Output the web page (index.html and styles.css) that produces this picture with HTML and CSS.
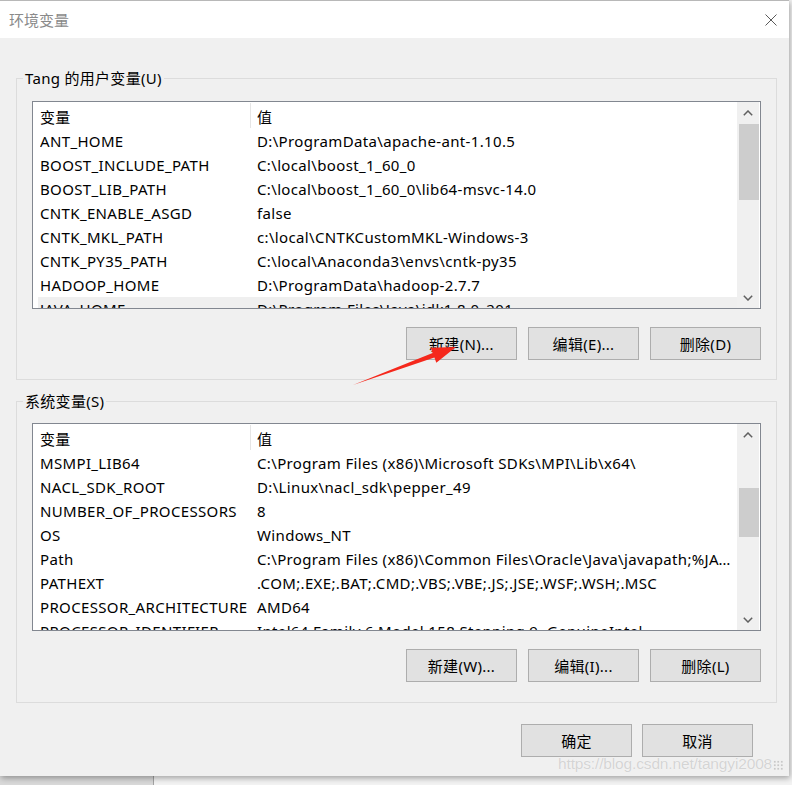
FILE: index.html
```html
<!DOCTYPE html>
<html lang="zh-CN">
<head>
    <meta charset="UTF-8">
    <title>环境变量</title>
    <link rel="stylesheet" href="styles.css">
</head>
<body>
    <div class="dialog">
        <div class="titlebar">
            <span class="title">环境变量</span>
            <svg class="close" width="12" height="12" viewBox="0 0 12 12">
                <path d="M0.5 0.5 L11.5 11.5 M11.5 0.5 L0.5 11.5" stroke="#5a5a5a" stroke-width="1" fill="none"/>
            </svg>
        </div>
        <div class="content">
            <fieldset class="group group-user">
                <legend>Tang 的用户变量(U)</legend>
                <div class="listview">
                    <div class="list-main">
                        <div class="list-head">
                            <div class="head-name">变量</div>
                            <div class="col-sep"></div>
                            <div class="head-value">值</div>
                        </div>
                        <div class="row"><div class="cell-name">ANT_HOME</div><div class="cell-value">D:\ProgramData\apache-ant-1.10.5</div></div>
                        <div class="row"><div class="cell-name">BOOST_INCLUDE_PATH</div><div class="cell-value">C:\local\boost_1_60_0</div></div>
                        <div class="row"><div class="cell-name">BOOST_LIB_PATH</div><div class="cell-value">C:\local\boost_1_60_0\lib64-msvc-14.0</div></div>
                        <div class="row"><div class="cell-name">CNTK_ENABLE_ASGD</div><div class="cell-value">false</div></div>
                        <div class="row"><div class="cell-name">CNTK_MKL_PATH</div><div class="cell-value">c:\local\CNTKCustomMKL-Windows-3</div></div>
                        <div class="row"><div class="cell-name">CNTK_PY35_PATH</div><div class="cell-value">C:\local\Anaconda3\envs\cntk-py35</div></div>
                        <div class="row"><div class="cell-name">HADOOP_HOME</div><div class="cell-value">D:\ProgramData\hadoop-2.7.7</div></div>
                        <div class="row row-hover"><div class="cell-name">JAVA_HOME</div><div class="cell-value">D:\Program Files\Java\jdk1.8.0_201</div></div>
                    </div>
                    <div class="scrollbar">
                        <div class="sb-arrow">
                            <svg width="10" height="6" viewBox="0 0 10 6"><path d="M0.8 5.2 L5 1 L9.2 5.2" stroke="#606060" stroke-width="1.5" fill="none"/></svg>
                        </div>
                        <div class="sb-track"><div class="sb-thumb thumb-user"></div></div>
                        <div class="sb-arrow">
                            <svg width="10" height="6" viewBox="0 0 10 6"><path d="M0.8 0.8 L5 5 L9.2 0.8" stroke="#606060" stroke-width="1.5" fill="none"/></svg>
                        </div>
                    </div>
                </div>
                <div class="btn-row">
                    <button class="btn">新建(N)...</button>
                    <button class="btn">编辑(E)...</button>
                    <button class="btn">删除(D)</button>
                </div>
            </fieldset>

            <fieldset class="group group-sys">
                <legend>系统变量(S)</legend>
                <div class="listview">
                    <div class="list-main">
                        <div class="list-head">
                            <div class="head-name">变量</div>
                            <div class="col-sep"></div>
                            <div class="head-value">值</div>
                        </div>
                        <div class="row"><div class="cell-name">MSMPI_LIB64</div><div class="cell-value">C:\Program Files (x86)\Microsoft SDKs\MPI\Lib\x64\</div></div>
                        <div class="row"><div class="cell-name">NACL_SDK_ROOT</div><div class="cell-value">D:\Linux\nacl_sdk\pepper_49</div></div>
                        <div class="row"><div class="cell-name">NUMBER_OF_PROCESSORS</div><div class="cell-value">8</div></div>
                        <div class="row"><div class="cell-name">OS</div><div class="cell-value">Windows_NT</div></div>
                        <div class="row"><div class="cell-name">Path</div><div class="cell-value">C:\Program Files (x86)\Common Files\Oracle\Java\javapath;%JAVA_HOME%\bin;%JAVA_HOME%\jre\bin</div></div>
                        <div class="row"><div class="cell-name">PATHEXT</div><div class="cell-value">.COM;.EXE;.BAT;.CMD;.VBS;.VBE;.JS;.JSE;.WSF;.WSH;.MSC</div></div>
                        <div class="row"><div class="cell-name">PROCESSOR_ARCHITECTURE</div><div class="cell-value">AMD64</div></div>
                        <div class="row"><div class="cell-name">PROCESSOR_IDENTIFIER</div><div class="cell-value">Intel64 Family 6 Model 158 Stepping 9, GenuineIntel</div></div>
                    </div>
                    <div class="scrollbar">
                        <div class="sb-arrow">
                            <svg width="10" height="6" viewBox="0 0 10 6"><path d="M0.8 5.2 L5 1 L9.2 5.2" stroke="#606060" stroke-width="1.5" fill="none"/></svg>
                        </div>
                        <div class="sb-track"><div class="sb-thumb thumb-sys"></div></div>
                        <div class="sb-arrow">
                            <svg width="10" height="6" viewBox="0 0 10 6"><path d="M0.8 0.8 L5 5 L9.2 0.8" stroke="#606060" stroke-width="1.5" fill="none"/></svg>
                        </div>
                    </div>
                </div>
                <div class="btn-row">
                    <button class="btn">新建(W)...</button>
                    <button class="btn">编辑(I)...</button>
                    <button class="btn">删除(L)</button>
                </div>
            </fieldset>

            <div class="dialog-actions">
                <button class="btn">确定</button>
                <button class="btn">取消</button>
            </div>
        </div>
    </div>

    <!-- red marker arrow drawn over the screenshot -->
    <svg class="arrow" width="792" height="785" viewBox="0 0 792 785">
        <polygon points="353,385 432.6,353 430.7,347.8 456,347 436.3,362.8 434.4,357.6" fill="#f5281c"/>
    </svg>

    <div class="watermark">https://blog.csdn.net/tangyi2008<span class="wm-dots"></span></div>
</body>
</html>
```

FILE: styles.css
```css
* {
    box-sizing: border-box;
}
body {
    margin: 0;
    width: 792px;
    height: 785px;
    overflow: hidden;
    position: relative;
    font-family: "Noto Sans", "Noto Sans CJK SC", sans-serif;
    font-size: 15px;
    color: #000000;
    background: linear-gradient(to right, #d9d9d9 0, #d9d9d9 153px, #a3a3a3 153px, #a3a3a3 154px, #f3f3f3 154px);
}
.dialog {
    width: 789px;
    height: 776px;
    background-color: #f0f0f0;
    border-top: 1px solid #b8b8b8;
    box-shadow: 1px 2px 6px rgba(0, 0, 0, 0.35);
}
.titlebar {
    height: 37px;
    background-color: #ffffff;
    display: flex;
    align-items: center;
    justify-content: space-between;
    padding: 0 12px 0 9px;
}
.title {
    color: #8a8a8a;
    font-size: 15px;
}
.content {
    padding: 30px 12px 0 16px;
}
.group {
    margin: 0;
    padding: 13px 15px 19px;
    border: 1px solid #dcdcdc;
    min-width: 0;
}
.group legend {
    padding: 0 2px;
    margin-left: -9px;
    line-height: 20px;
    letter-spacing: 0.3px;
}
.group-sys {
    margin-top: 11px;
    padding-top: 12px;
    padding-bottom: 20px;
}
.listview {
    height: 208px;
    border: 1px solid #828790;
    background-color: #ffffff;
    display: flex;
}
.list-main {
    flex: 1;
    min-width: 0;
    overflow: hidden;
    letter-spacing: 0.35px;
}
.list-head {
    height: 27px;
    display: flex;
    align-items: center;
}
.head-name {
    width: 217px;
    height: 27px;
    padding: 3px 0 0 7px;
    line-height: 25px;
}
.col-sep {
    width: 1px;
    height: 25px;
    background-color: #e5e5e5;
}
.head-value {
    flex: 1;
    height: 27px;
    padding: 3px 0 0 6px;
    line-height: 25px;
}
.row {
    display: flex;
    height: 24px;
    line-height: 24px;
    margin-left: 5px;
    padding-left: 2px;
    white-space: nowrap;
}
.row-hover {
    background-color: #efefef;
}
.cell-name {
    width: 210px;
    flex-shrink: 0;
    overflow: hidden;
}
.cell-value {
    flex: 1;
    min-width: 0;
    padding-left: 7px;
    padding-right: 6px;
    overflow: hidden;
    text-overflow: ellipsis;
}
.scrollbar {
    width: 22px;
    margin-right: 1px;
    background-color: #f0f0f0;
    display: flex;
    flex-direction: column;
}
.sb-arrow {
    height: 21px;
    display: flex;
    align-items: center;
    justify-content: center;
}
.sb-track {
    flex: 1;
    padding-left: 2px;
}
.sb-thumb {
    background-color: #cdcdcd;
}
.thumb-user {
    margin-top: 1px;
    height: 76px;
}
.thumb-sys {
    margin-top: 43px;
    height: 49px;
}
.btn-row {
    display: flex;
    justify-content: flex-end;
    gap: 11px;
    margin-top: 18px;
}
.btn {
    width: 111px;
    height: 33px;
    padding: 0;
    background-color: #e1e1e1;
    border: 1px solid #adadad;
    font-family: inherit;
    font-size: 15px;
    letter-spacing: 0.3px;
    color: #000000;
}
.dialog-actions {
    display: flex;
    justify-content: flex-end;
    gap: 10px;
    margin-top: 21px;
    padding-right: 24px;
}
.arrow {
    position: absolute;
    left: 0;
    top: 0;
    pointer-events: none;
}
.watermark {
    position: absolute;
    left: 558px;
    top: 755px;
    white-space: nowrap;
    font-family: "Liberation Sans", Arial, sans-serif;
    font-size: 15.5px;
    letter-spacing: -0.15px;
    color: #d4d4d4;
    text-shadow: 0 0 1px #ffffff;
    display: flex;
    align-items: flex-end;
}
.wm-dots {
    width: 10px;
    height: 10px;
    margin-left: 1px;
    margin-bottom: 3px;
    background: radial-gradient(circle, #c8c8c8 1.2px, transparent 1.3px) 0 0 / 3.5px 3.5px;
}
```
